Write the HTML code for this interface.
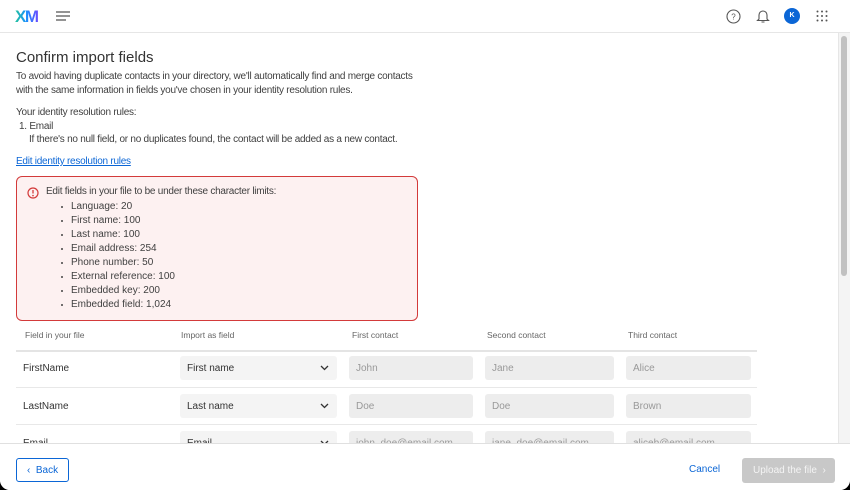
<!DOCTYPE html>
<html><head><meta charset="utf-8"><style>
*{margin:0;padding:0;box-sizing:border-box}
html,body{width:850px;height:490px;overflow:hidden;background:#000}
body{font-family:"Liberation Sans",sans-serif;color:#333;position:relative}
.frame{position:absolute;left:0;top:0;width:850px;height:490px;background:#fff;border-radius:0 0 10px 10px;overflow:hidden}
.a{position:absolute;white-space:nowrap}
.t{font-size:10px;letter-spacing:-0.25px;color:#404040}
.hdr{position:absolute;left:0;top:0;width:850px;height:33px;border-bottom:1px solid #e6e6e6;background:#fff}
.sb{position:absolute;left:838px;top:33px;width:12px;height:410px;background:#f4f4f4;border-left:1px solid #e6e6e6}
.thumb{position:absolute;left:841px;top:36px;width:6px;height:240px;background:#c1c1c1;border-radius:3px}
.err{position:absolute;left:16px;top:176px;width:402px;height:145px;background:#fdf1f1;border:1px solid #d33a3a;border-radius:6px}
.li{position:absolute;left:71px;font-size:10px;color:#404040;top:0}
.li:before{content:"";position:absolute;left:-10px;top:5px;width:2px;height:2px;background:#444;border-radius:1px}
.th{font-size:8.5px;color:#666;top:330px}
.row{position:absolute;left:16px;width:741px;border-top:1px solid #e8e8e8}
.sel{position:absolute;width:157px;height:24px;background:#f4f4f4;border-radius:3px;font-size:10px;color:#333;padding:7px 0 0 7px}
.sel svg{position:absolute;right:8px;top:9px}
.inp{position:absolute;height:24px;background:#ededed;border-radius:3px;font-size:10px;color:#999;padding:7px 0 0 7px}
.foot{position:absolute;left:0;top:443px;width:850px;height:47px;border-top:1px solid #e0e0e0;background:#fff}
</style></head><body><div class="frame">
<div class="hdr">
  <div class="a" style="left:15px;top:7px;font-size:17px;font-weight:bold;letter-spacing:-1.5px;background:linear-gradient(90deg,#21c49a,#1a8fff 50%,#6b4bff);-webkit-background-clip:text;color:transparent">XM</div>
  <svg class="a" style="left:56px;top:11px" width="14" height="10"><path d="M0 1h14M0 5h14M0 9h10" stroke="#555" stroke-width="1.3"/></svg>
  <svg class="a" style="left:726px;top:9px" width="15" height="15"><circle cx="7.5" cy="7.5" r="6.5" fill="none" stroke="#555" stroke-width="1.1"/><text x="7.5" y="10.5" font-size="8" text-anchor="middle" fill="#555" font-family="Liberation Sans">?</text></svg>
  <svg class="a" style="left:756px;top:8px" width="14" height="16"><path d="M3 11V7a4 4 0 0 1 8 0v4l1.5 1.5h-11z M5.5 14h3" fill="none" stroke="#555" stroke-width="1.1"/></svg>
  <div class="a" style="left:784px;top:8px;width:16px;height:16px;border-radius:50%;background:#0b66d6;color:#fff;font-size:7px;font-weight:bold;text-align:center;line-height:16px">K</div>
  <svg class="a" style="left:816px;top:10px" width="12" height="12" fill="#555"><circle cx="1.5" cy="1.5" r="1"/><circle cx="6" cy="1.5" r="1"/><circle cx="10.5" cy="1.5" r="1"/><circle cx="1.5" cy="6" r="1"/><circle cx="6" cy="6" r="1"/><circle cx="10.5" cy="6" r="1"/><circle cx="1.5" cy="10.5" r="1"/><circle cx="6" cy="10.5" r="1"/><circle cx="10.5" cy="10.5" r="1"/></svg>
</div>
<div class="sb"></div><div class="thumb"></div>

<div class="a" style="left:16px;top:49px;font-size:15px;color:#333">Confirm import fields</div>
<div class="a t" style="left:16px;top:71px">To avoid having duplicate contacts in your directory, we'll automatically find and merge contacts</div>
<div class="a t" style="left:16px;top:85px">with the same information in fields you've chosen in your identity resolution rules.</div>
<div class="a t" style="left:16px;top:107px">Your identity resolution rules:</div>
<div class="a t" style="left:19px;top:121px">1. Email</div>
<div class="a t" style="left:29px;top:134px">If there's no null field, or no duplicates found, the contact will be added as a new contact.</div>
<div class="a t" style="left:16px;top:156px;color:#0b66d6;text-decoration:underline">Edit identity resolution rules</div>

<div class="err"></div>
<svg class="a" style="left:27px;top:187px" width="12" height="12"><circle cx="6" cy="6" r="5" fill="none" stroke="#d33a3a" stroke-width="1.2"/><path d="M6 3v3.5" stroke="#d33a3a" stroke-width="1.3"/><circle cx="6" cy="8.6" r="0.8" fill="#d33a3a"/></svg>
<div class="a t" style="left:46px;top:186px">Edit fields in your file to be under these character limits:</div>
<div class="li a" style="top:201px">Language: 20</div>
<div class="li a" style="top:215px">First name: 100</div>
<div class="li a" style="top:229px">Last name: 100</div>
<div class="li a" style="top:243px">Email address: 254</div>
<div class="li a" style="top:257px">Phone number: 50</div>
<div class="li a" style="top:271px">External reference: 100</div>
<div class="li a" style="top:285px">Embedded key: 200</div>
<div class="li a" style="top:299px">Embedded field: 1,024</div>

<div class="a th" style="left:25px">Field in your file</div>
<div class="a th" style="left:181px">Import as field</div>
<div class="a th" style="left:352px">First contact</div>
<div class="a th" style="left:487px">Second contact</div>
<div class="a th" style="left:628px">Third contact</div>
<div class="row" style="top:350px;border-top:2px solid #e4e4e4"></div>
<div class="row" style="top:387px"></div>
<div class="row" style="top:424px"></div>

<div class="a" style="left:23px;top:363px;font-size:10px">FirstName</div>
<div class="sel" style="left:180px;top:356px">First name<svg width="9" height="6"><path d="M1 1l3.5 3.5L8 1" fill="none" stroke="#333" stroke-width="1.3"/></svg></div>
<div class="inp" style="left:349px;top:356px;width:124px">John</div>
<div class="inp" style="left:485px;top:356px;width:129px">Jane</div>
<div class="inp" style="left:626px;top:356px;width:125px">Alice</div>

<div class="a" style="left:23px;top:401px;font-size:10px">LastName</div>
<div class="sel" style="left:180px;top:394px">Last name<svg width="9" height="6"><path d="M1 1l3.5 3.5L8 1" fill="none" stroke="#333" stroke-width="1.3"/></svg></div>
<div class="inp" style="left:349px;top:394px;width:124px">Doe</div>
<div class="inp" style="left:485px;top:394px;width:129px">Doe</div>
<div class="inp" style="left:626px;top:394px;width:125px">Brown</div>

<div class="a" style="left:23px;top:438px;font-size:10px">Email</div>
<div class="sel" style="left:180px;top:431px">Email<svg width="9" height="6"><path d="M1 1l3.5 3.5L8 1" fill="none" stroke="#333" stroke-width="1.3"/></svg></div>
<div class="inp" style="left:349px;top:431px;width:124px">john_doe@email.com</div>
<div class="inp" style="left:485px;top:431px;width:129px">jane_doe@email.com</div>
<div class="inp" style="left:626px;top:431px;width:125px">aliceb@email.com</div>

<div class="foot">
  <div class="a" style="left:16px;top:14px;width:53px;height:24px;border:1px solid #0b66d6;border-radius:3px;color:#0b66d6;font-size:10px;padding:6px 0 0 10px">‹&nbsp;&nbsp;Back</div>
  <div class="a" style="left:689px;top:20px;font-size:10px;color:#0b66d6">Cancel</div>
  <div class="a" style="left:742px;top:14px;width:93px;height:25px;background:#c8c8c8;border-radius:3px;color:#f4f4f4;font-size:10px;padding:7px 0 0 11px">Upload the file&nbsp;&nbsp;›</div>
</div>
</div></body></html>
